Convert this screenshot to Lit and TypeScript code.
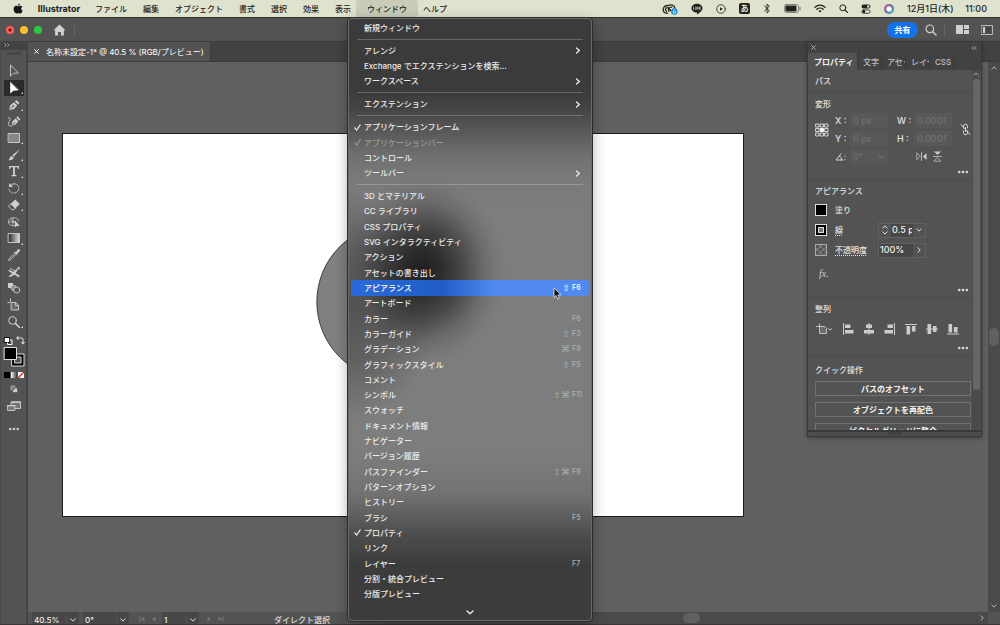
import { LitElement, html, css, svg, nothing, TemplateResult } from "lit";
import { customElement, state } from "lit/decorators.js";
import { classMap } from "lit/directives/class-map.js";

type Entry = { label: string; mods?: string; keys?: string; sub?: boolean; checked?: boolean; disabled?: boolean } | null;

const MENU: Entry[] = [
  { label: "新規ウィンドウ" },
  null,
  { label: "アレンジ", sub: true },
  { label: "Exchange でエクステンションを検索..." },
  { label: "ワークスペース", sub: true },
  null,
  { label: "エクステンション", sub: true },
  null,
  { label: "アプリケーションフレーム", checked: true },
  { label: "アプリケーションバー", checked: true, disabled: true },
  { label: "コントロール" },
  { label: "ツールバー", sub: true },
  null,
  { label: "3D とマテリアル" },
  { label: "CC ライブラリ" },
  { label: "CSS プロパティ" },
  { label: "SVG インタラクティビティ" },
  { label: "アクション" },
  { label: "アセットの書き出し" },
  { label: "アピアランス", mods: "⇧", keys: "F6" },
  { label: "アートボード" },
  { label: "カラー", keys: "F6" },
  { label: "カラーガイド", mods: "⇧", keys: "F3" },
  { label: "グラデーション", mods: "⌘", keys: "F9" },
  { label: "グラフィックスタイル", mods: "⇧", keys: "F5" },
  { label: "コメント" },
  { label: "シンボル", mods: "⇧⌘", keys: "F11" },
  { label: "スウォッチ" },
  { label: "ドキュメント情報" },
  { label: "ナビゲーター" },
  { label: "バージョン履歴" },
  { label: "パスファインダー", mods: "⇧⌘", keys: "F9" },
  { label: "パターンオプション" },
  { label: "ヒストリー" },
  { label: "ブラシ", keys: "F5" },
  { label: "プロパティ", checked: true },
  { label: "リンク" },
  { label: "レイヤー", keys: "F7" },
  { label: "分割・統合プレビュー" },
  { label: "分版プレビュー" },
];

const icon = (w: number, h: number, body: TemplateResult, box = `0 0 ${w} ${h}`) =>
  html`<svg width=${w} height=${h} viewBox=${box} aria-hidden="true" fill="none" stroke="currentColor" stroke-linecap="round" stroke-linejoin="round">${body}</svg>`;

const chevronDown = () => icon(6, 4, svg`<path d="M.7 .8 3 3.1 5.300 .8"/>`);
const chevronUp = () => icon(6, 4, svg`<path d="M.7 3.200 3 .9 5.300 3.200"/>`);
const chevronRight = () => icon(4, 6, svg`<path d="M.9 .7 3.200 3 .9 5.300"/>`);
const dots = () => icon(12, 4, svg`<g fill="currentColor" stroke="none"><circle cx="2.200" cy="2" r="1.300"/><circle cx="6" cy="2" r="1.300"/><circle cx="9.800" cy="2" r="1.300"/></g>`);

/* Toolbar glyphs, all on a 14 × 14 grid. */
const TOOLS: { name: string; more?: boolean; art: TemplateResult }[] = [
  { name: "選択", art: svg`<path d="M3.500 1.500v10.500l2.900-2.600 4.600-.5z" stroke-width=".9"/>` },
  { name: "ダイレクト選択", more: true, art: svg`<path d="M3.500 1.500v10.500l2.900-2.600 4.600-.5z" fill="#fff" stroke="#fff" stroke-width=".6"/>` },
  { name: "ペン", more: true, art: svg`<path d="M2 12.200 3.200 7.300 7 4.200l3.200 3.200-3.100 3.700zM7.900 3.400l1.500-1.500 3 3-1.500 1.500z" fill="currentColor" stroke="none"/><path d="M2 12.200 6 8.200" stroke="#535353" stroke-width=".8"/><circle cx="6.300" cy="7.900" r=".9" fill="#535353" stroke="none"/>` },
  { name: "曲線", art: svg`<path d="M4.500 11.800 5.500 7.300 8.500 4.400l2.900 2.900-2.900 3.300zM9.200 3.700l1.300-1.400 2.900 2.900-1.300 1.300z" fill="currentColor" stroke="none"/><path d="M5 11.500 8 8.300" stroke="#535353" stroke-width=".8"/><path d="M1.300 3.500C4 3.800 3.200 6 2 8.200S1.400 12.600 4.500 12" stroke-width=".9"/>` },
  { name: "長方形", more: true, art: svg`<path d="M1.500 2.500h11v9h-11z" fill="#888" stroke-width=".9"/>` },
  { name: "ブラシ", more: true, art: svg`<path d="M12.700 1.200 7 8.700 5.300 7.300zM4.700 7.900l1.900 1.600c-.2 2.200-2.600 3.200-5.200 2.600 1.500-.7 1.100-3.700 3.300-4.200z" fill="currentColor" stroke="none"/>` },
  { name: "文字", more: true, art: svg`<path d="M2 2h10v3h-1.100L10.500 3.300H7.900v7.500l1.600.5V12.200h-5v-.9l1.600-.5V3.300H3.500L3.100 5H2z" fill="currentColor" stroke="none"/>` },
  { name: "回転", more: true, art: svg`<path d="M3 5C5 2 9.500 2 11.300 5" /><path d="M2 2v4h4z" fill="currentColor" stroke="none"/><path d="M11.700 6c.6 3-1.400 5.700-4.400 6S2.500 10.500 2 8.500" stroke-dasharray="1 1.400"/>` },
  { name: "消しゴム", more: true, art: svg`<path d="M8.200 1.500 12.700 6 8.200 10.500 3.700 6z" fill="currentColor" stroke="none"/><path d="M3.700 6 1.500 8.200 5 11.700h2l1.200-1.200z" stroke-width=".9"/>` },
  { name: "シェイプ形成", art: svg`<path d="M8 10.500c-3 .8-6.500-.5-6.500-3.500S4 2.500 6 3c2-1.200 5.500.5 5.500 3M1.800 7h6M6 3v7M4 4.500l4 3" stroke-width=".8"/><path d="M8 5.500v7l1.800-1.600 3-.2z" fill="currentColor" stroke="none"/>` },
  { name: "グラデーション", more: true, art: svg`<defs><linearGradient id="tg"><stop stop-color="#2b2b2b"/><stop offset="1" stop-color="#ddd"/></linearGradient></defs><path d="M1.500 2.500h11v9h-11z" fill="url(#tg)" stroke-width=".9"/>` },
  { name: "スポイト", art: svg`<path d="M8.800 4.200 10.800 1.500a1.300 1.300 0 0 1 2 1.800L10.200 5.600l.5.700-.9.800L7 4.300l.8-.9z" fill="currentColor" stroke="none"/><path d="M7.600 5.300 2.500 10.300 1.600 12.400 3.800 11.500 8.900 6.500" stroke-width=".9"/>` },
  { name: "パペットワープ", art: svg`<path d="M2 4.500 6.500 7l3-3.200 1.200 1.200L8.500 8.200l4.500 2.300-.5 1L7.500 9.700 3 12l-1.500-.8L5.300 8.500 1.500 6z" fill="currentColor" stroke="none"/><path d="M3.500 3.500 8.500 6.500M9 10.500l2.500 1.500" stroke-width=".9"/><circle cx="11.500" cy="3.300" r="1.200" fill="currentColor" stroke="none"/>` },
  { name: "ブレンド", art: svg`<path d="M1 2h5v5H1z" fill="currentColor" stroke="none"/><circle cx="6.800" cy="7" r="2.700" fill="#8b8b8b" stroke-width=".7"/><circle cx="9.700" cy="9" r="3" fill="#535353" stroke-width=".9"/>` },
  { name: "アートボード", art: svg`<path d="M3.500 .8v3M.8 4.500h2M4.500 4.500h4.300l2.700 2.700v4.800h-7z" fill="#6c6c6c" stroke-width=".9"/><path d="M8.500 4.500v3h3" stroke-width=".8"/>` },
  { name: "ズーム", more: true, art: svg`<circle cx="5.500" cy="5.500" r="3.800"/><path d="M8.400 8.400 12.500 12.500" stroke-width="1.500"/>` },
];

const ALIGN: { name: string; art: TemplateResult }[] = [
  { name: "左揃え", art: svg`<path d="M1 0h1v12H1zM3 1.500h5.500v3.600H3zM3 6.900h8.500v3.600H3z"/>` },
  { name: "水平中央", art: svg`<path d="M5.500 0h1v12h-1zM3 1.500h6v3.600H3zM1 6.900h10v3.600H1z"/>` },
  { name: "右揃え", art: svg`<path d="M10 0h1v12h-1zM3.500 1.500H9v3.600H3.500zM.5 6.900H9v3.600H.5z"/>` },
  { name: "上揃え", art: svg`<path d="M0 1h12v1H0zM1.500 3h3.600v8.500H1.500zM6.900 3h3.600v5.500H6.900z"/>` },
  { name: "垂直中央", art: svg`<path d="M0 5.500h12v1H0zM1.500 1h3.600v10H1.500zM6.900 3h3.600v6H6.900z"/>` },
  { name: "下揃え", art: svg`<path d="M0 10.500h12v1H0zM1.500 1h3.600v8.500H1.500zM6.900 4h3.600v5.500H6.900z"/>` },
];

@customElement("app-root")
export class AppRoot extends LitElement {
  @state() private hot = "アピアランス";
  @state() private tool = "ダイレクト選択";

  static styles = css`
    :host {
      display: flex; flex-direction: column; height: 100vh; overflow: hidden; position: relative;
      background: #535353; color: #e2e2e2;
      font: 500 8px/12px Inter, "Noto Sans CJK JP", sans-serif;
    }
    * { box-sizing: border-box; }
    svg { display: block; flex: none; }
    button, input, select { font: inherit; color: inherit; background: none; border: 0; margin: 0; padding: 0; border-radius: 0; }
    button { display: flex; align-items: center; justify-content: center; white-space: nowrap; }
    input { min-width: 0; }

    .menubar { flex: none; display: flex; height: 17px; background: #dfe2cd; color: #22231e; padding: 0 13px; align-items: center; }
    .apple { width: 10px; margin-right: 7px; }
    .mb { height: 17px; padding: 0 8px; }
    .mb.app { font-size: 9px; font-weight: 700; margin-right: 6px; padding: 0 0 0 7px; width: 51px; }
    .open { position: relative; margin: 0 -3px; }
    .open > .mb { background: #c9ccb9; border-radius: 3px; padding: 0 11px; }
    .status { display: flex; align-items: center; gap: 13px; margin-left: auto; }
    .ime { width: 11px; height: 11px; border-radius: 2px; background: #22231e; color: #fff; font-size: 8px; line-height: 11px; text-align: center; }
    .clock { font-size: 9px; white-space: nowrap; width: 80px; display: flex; justify-content: space-between; }

    .appbar { flex: none; display: flex; align-items: center; height: 24px; border-top: 1px solid #333; padding: 0 7px 0 6px; color: #d0d0d0; background: #535353; }
    .light { width: 8px; height: 8px; border-radius: 50%; margin-right: 6px; }
    .red { background: radial-gradient(circle, #7c0a05 0 1px, #fb6057 2px); }
    .yellow { background: #fdbc2f; }
    .green { background: #2bc840; margin-right: 11px; }
    .vr { width: 1px; height: 13px; background: #646464; }
    .home { margin-right: 8px; }
    .tools-right { display: flex; align-items: center; margin-left: auto; }
    .share { background: #1473e6; color: #fff; border-radius: 8px; height: 16px; width: 31px; margin-right: 7px; font-weight: 700; }
    .tools-right .vr { margin: 0 11px 0 7px; }
    .layout { margin-right: 12px; }

    .work { flex: 1; min-height: 0; display: flex; border-bottom: 1px solid #3a3536; }
    .toolbar { flex: none; width: 28px; border-right: 2px solid #444; background: #535353; display: flex; flex-direction: column; align-items: center; border-left: 1px solid #494949; color: #cfcfcf; }
    .grip-head { align-self: stretch; height: 9px; background: #424242; color: #bbb; padding: 2px 0 0 3px; }
    .grip { width: 14px; height: 3px; margin: 2px 0 8px; background: #464646; }
    .tools { display: grid; grid-auto-rows: 1fr; height: 267px; width: 20px; }
    .tool { position: relative; width: 20px; }
    .tool.on { background: #2a2a2a; }
    .tool.nest::after { content: ""; position: absolute; right: 1px; bottom: 2px; border: 1px solid transparent; border-right-color: #ddd; border-bottom-color: #ddd; }
    .toolfoot { display: flex; flex-direction: column; align-items: center; margin-top: 4px; }
    .toolfoot .mode { margin-top: 4px; }
    .toolfoot .screen { margin-top: 7px; }
    .toolfoot .more-tools { margin-top: 15px; }

    .doc { flex: 1; min-width: 0; display: flex; flex-direction: column; }
    .tabs { flex: none; display: flex; height: 21px; background: #424242; border-top: 1px solid #3b3b3b; border-bottom: 1px solid #3b3b3b; }
    .tab { display: flex; align-items: center; gap: 7px; padding: 0 6px; background: #535353; border-right: 1px solid #3b3b3b; color: #fff; font-weight: 400; white-space: nowrap; }
    .stage { flex: 1; min-height: 0; display: flex; }
    .canvas { flex: 1; background: #606060; overflow: hidden; padding: 71px 0 0 34px; }
    .artboard { width: 73.6%; background: #fff; border: 1px solid #1c1c1c; }
    .artboard svg { width: 100%; height: auto; }
    .vscroll { flex: none; width: 12px; background: #4a4a4a; color: #b5b5b5; display: flex; flex-direction: column; align-items: center; justify-content: space-between; padding: 4px 0; }
    .vthumb { width: 10px; height: 18px; border-radius: 5px; background: #606060; }
    .statusbar { flex: none; display: flex; align-items: center; height: 12px; background: #535353; padding-left: 4px; overflow: hidden; }
    .statusbar input { height: 12px; background: #474747; padding: 3px 2px 0; color: #eee; }
    .zoom { width: 34px; }
    .angle { width: 33px; }
    .page { width: 24px; }
    .drop { width: 12px; height: 12px; margin: 0 4px 0 1px; padding-top: 3px; background: #474747; }
    .nav { width: 12px; height: 12px; padding-top: 2px; color: #777; }
    .nav.first { margin-left: 3px; }
    .nav.back { margin-right: 2px; }
    .current { margin-left: 47px; width: 99px; padding-top: 3px; color: #ddd; }
    .hscroll { flex: 1; height: 12px; background: #4a4a4a; display: flex; align-items: center; margin-left: 5px; color: #b5b5b5; padding: 0 4px 0 20px; }
    .hthumb { width: 17px; height: 10px; border-radius: 5px; background: #606060; margin: 0 auto; }
    .corner { width: 12px; height: 12px; background: #535353; }

    .dropdown {
      position: absolute; z-index: 5; left: -8px; top: 18px; width: 244px; height: calc(100vh - 22px);
      display: flex; flex-direction: column; padding: 1px 2px 0; color: #ececec;
      border: 1px solid #6a6a6a; border-radius: 4px; box-shadow: 0 0 0 1px #2c2c2c, 0 4px 14px #0005;
      background:
        radial-gradient(ellipse 84px 96px at 74px 252px, #1a1a1af0, #1e1e1ed8 22%, #26262698 48%, #3030303c 72%, #40404014 88%, #50505000),
        radial-gradient(ellipse 90px 115px at 0 285px, #3c3c3ca0, #3c3c3c70 50%, #50505000),
        linear-gradient(#3b3b3b 0 12%, #444 15%, #5a5a5a 19%, #717171 23%, #7a7a7a 27%, #7d7d7d 32% 72%, #727272 79%, #4c4c4c 86%, #3c3c3c 91%);
    }
    .item { flex: 2 2 0; min-height: 0; display: grid; grid-template-columns: 13px 1fr auto auto; text-align: left; padding: 0 7px 0 0; border-radius: 3px; align-items: center; justify-items: start; }
    .item .sc { font-size: 7px; color: #b0b0b0; min-width: 10px; }
    .item .mods { font: 9px/12px "DejaVu Sans", sans-serif; color: #b0b0b0; margin-right: 2px; }
    .item.dim { color: #999; }
    .item.hot { background: linear-gradient(90deg, #2a6adb, #1f5dc4 38%, #5089f0 60%); color: #fff; }
    .item.hot .sc, .item.hot .mods { color: #fff; }
    .tick { padding-left: 3px; }
    .sep { flex: 1 1 0; min-height: 0; display: flex; align-items: center; padding: 0 6px; }
    .sep i { flex: 1; height: 1px; background: #ffffff38; }
    .scroll { flex: none; height: 18px; display: flex; align-items: center; justify-content: center; padding-top: 4px; }
    .pointer { position: absolute; z-index: 6; left: 553px; top: 287px; }

    .panel { position: absolute; z-index: 3; right: 18px; top: 41px; width: 175px; height: 396px; display: flex; flex-direction: column; background: #535353; border: 1px solid #3a3a3a; box-shadow: 0 1px 4px #0006; }
    .phead { flex: none; height: 11px; background: #424242; display: flex; justify-content: space-between; align-items: center; padding: 0 4px 0 3px; color: #ccc; }
    .ptabs { flex: none; height: 17px; background: #424242; display: flex; }
    .ptab { width: 24px; padding: 0 0 0 5px; justify-content: flex-start; overflow: hidden; color: #bdbdbd; border-right: 1px solid #393939; }
    .ptab.on { width: 50px; padding-left: 6px; background: #535353; color: #f2f2f2; font-weight: 700; }
    .pbody { flex: 1; min-height: 0; display: flex; overflow: hidden; }
    .content { flex: 1; min-width: 0; overflow: hidden; }
    .section { padding: 5px 1px 5px 7px; border-top: 1px solid #4a4a4a; }
    .section.first { border: 0; }
    .title { margin: 0 0 3px; font-size: 8px; font-weight: 500; height: 12px; }
    .section.first .title { margin: 0; }
    .geo { display: grid; grid-template-columns: 20px 15px 38px 26px 38px 1fr; row-gap: 3px; align-items: center; }
    .geo label { font-size: 9px; }
    .geo label.w { padding-left: 9px; }
    .geo input, .geo select { height: 15px; width: 100%; background: #585858; color: #707070; padding: 0 3px; font-size: 9px; appearance: none; opacity: 1; }
    .ref { grid-row: 1 / 3; }
    .link { grid-row: 1 / 3; grid-column: 6; justify-self: end; }
    .ang { grid-column: 2; }
    .flips { grid-column: 4 / 7; display: flex; gap: 6px; align-items: center; padding-left: 28px; color: #ccc; }
    .selwrap { display: grid; align-items: center; justify-items: end; color: #777; }
    .selwrap > * { grid-area: 1 / 1; }
    .selwrap svg { margin-right: 4px; pointer-events: none; }
    .more { display: flex; justify-content: flex-end; padding: 0 2px; height: 10px; align-items: flex-end; margin: 0 0 0 auto; color: #ddd; }
    .attrs { display: grid; grid-template-columns: 20px 43px auto; grid-auto-rows: 20px; align-items: center; margin-bottom: 6px; }
    .swatch { width: 12px; height: 12px; border: 1px solid #ddd; background: #000; }
    .swatch.stroke { box-shadow: inset 0 0 0 2px #000, inset 0 0 0 3px #ddd; background: #777; }
    .swatch.alpha { background: repeating-conic-gradient(#777 0 25%, #555 0 50%) 0 0 / 6px 6px; border-color: #aaa; }
    .dot { text-decoration: underline dotted 1px; text-underline-offset: 2px; }
    .field { display: flex; border: 1px solid #626262; height: 15px; width: 48px; }
    .field input { background: #474747; font-size: 9px; color: #f0f0f0; padding: 0 1px; flex: 1; }
    .field button, .field .step { flex: none; width: 12px; display: flex; flex-direction: column; align-items: center; justify-content: center; gap: 2px; }
    .fx { font: italic 10px/16px "Liberation Serif", serif; color: #ccc; margin-left: 4px; }
    .aligns { display: grid; grid-template-columns: 24px repeat(6, 21px); height: 16px; align-items: center; color: #ccc; margin: 6px 0 3px; }
    .aligns button { justify-content: flex-start; }
    .aligns button:not(:first-child) { padding-left: 3px; }
    .section.actions { padding-top: 8px; }
    .actions .title { margin-bottom: 5px; }
    .quick { width: 100%; height: 15px; border: 1px solid #707070; color: #f2f2f2; font-weight: 700; margin-bottom: 6px; }
    .pscroll { flex: none; width: 8px; margin-right: 1px; background: #4a4a4a; color: #aaa; display: flex; flex-direction: column; align-items: center; padding-top: 2px; }
    .pthumb { width: 7px; flex: none; height: 87%; border-radius: 3px; background: #666; margin-top: 3px; }
    .pfoot { flex: none; height: 6px; border-top: 2px solid #383838; background: #4d4d4d; display: flex; justify-content: center; }
    .pfoot i { width: 14px; height: 3px; background: #414141; }
  `;

  private entry(e: Entry) {
    if (!e) return html`<div class="sep" role="separator"><i></i></div>`;
    return html`<button role="menuitem" class=${classMap({ item: true, dim: !!e.disabled, hot: e.label === this.hot })}
        ?disabled=${!!e.disabled} @mouseenter=${() => (this.hot = e.label)}>
      <span class="tick">${e.checked ? icon(7, 7, svg`<path d="M.8 3.800 2.700 6 6.200 .9" stroke-width="1.200"/>`) : nothing}</span>
      <span>${e.label}</span>
      ${e.sub
        ? icon(7, 7, svg`<path d="M1.500 .9 4.400 3.500 1.500 6.100" stroke-width="1.300"/>`)
        : html`<span class="mods">${e.mods ?? ""}</span>${e.keys ? html`<span class="sc">${e.keys}</span>` : nothing}`}
    </button>`;
  }

  private menubar() {
    return html`<nav class="menubar">
      <svg class="apple" width="10" height="12" viewBox="0 0 10 12" fill="#151613" aria-hidden="true"><path d="M6.900 .4c.1 1.200-.9 2.300-2 2.300C4.800 1.600 5.800 .5 6.900 .4zM5.100 3.300c.5 0 1.200-.6 2.200-.6.8 0 1.500.4 2 1-1.600 1-1.400 3.300.3 4-.4 1.200-1.400 2.900-2.400 2.900-.7 0-1-.4-1.900-.4s-1.200.4-1.900.4C2.100 10.600.6 8.300.6 6.100c0-2.100 1.300-3.300 2.600-3.300.9 0 1.400.5 1.900.5z"/></svg>
      <button class="mb app">Illustrator</button>
      ${["ファイル", "編集", "オブジェクト", "書式", "選択", "効果", "表示"].map((t) => html`<button class="mb">${t}</button>`)}
      <div class="open">
        <button class="mb" aria-expanded="true">ウィンドウ</button>
        <div class="dropdown" role="menu">
          ${MENU.map((e) => this.entry(e))}
          <div class="scroll">${icon(8, 5, svg`<path d="M1 1 4 3.800 7 1" stroke-width="1.400"/>`)}</div>
        </div>
      </div>
      <button class="mb">ヘルプ</button>
      <div class="status">
        ${icon(16, 12, svg`<path d="M5.500 10.200C2.500 10.600.8 8.300 1.200 6 1.600 3.500 4 2 6.300 2.700 8.500 1 12.300 2 13 5.200M4.500 8.300C2.800 7.300 3.300 4.700 5.300 4.700c1.700 0 2.200 1.300 3.400 2.800M9.700 4.200C7 4 5.600 6.300 7 8.300" stroke-width="1.300"/><circle cx="12.300" cy="8.500" r="3.200" fill="#1785d8" stroke="none"/><path d="M11.300 9.800v-2l1-.8 1 .8v2z" stroke="#fff" stroke-width=".7"/>`)}
        ${icon(12, 12, svg`<path d="M6 .8c3 0 5.500 1.900 5.500 4.400 0 2.400-2.500 4-5.300 6.200-.3-.6.300-1.600-.5-1.800C2.900 9.300.5 7.600.5 5.200.5 2.700 3 .8 6 .8z" fill="currentColor" stroke="none"/><path d="M2.500 4v2.300h1M4.700 4v2.300M5.800 6.300V4l1.400 2.300V4M9.600 4H8.400v2.300h1.200M8.400 5.200h1" stroke="#dfe2cd" stroke-width=".6"/>`)}
        ${icon(10, 10, svg`<circle cx="5" cy="5" r="4.300" stroke-width=".8"/><path d="M4 3.200v3.600L6.900 5z" fill="currentColor" stroke="none"/>`)}
        <span class="ime">あ</span>
        ${icon(8, 11, svg`<path d="M1.500 3 6.300 7.700 4 9.900V1.100l2.300 2.200L1.500 8" stroke-width=".9"/>`)}
        ${icon(17, 9, svg`<rect x=".5" y=".5" width="14" height="8" rx="2" stroke-width=".8" opacity=".6"/><rect x="1.500" y="1.500" width="11" height="6" rx="1" fill="currentColor" stroke="none"/><path d="M16 3.200v2.600" opacity=".6"/>`)}
        ${icon(12, 9, svg`<path d="M1 3.300C3.800.5 8.200.5 11 3.300M2.800 5.300c1.800-1.700 4.600-1.700 6.400 0" stroke-width="1.300"/><path d="M4.400 6.900c.9-.8 2.300-.8 3.200 0L6 8.600z" fill="currentColor" stroke="none"/>`)}
        ${icon(9, 9, svg`<circle cx="3.800" cy="3.800" r="3"/><path d="M6 6 8.400 8.400" stroke-width="1.200"/>`)}
        ${icon(10, 10, svg`<rect x=".6" y=".6" width="8.800" height="3.800" rx="1.900" fill="currentColor" stroke="none"/><circle cx="7.200" cy="2.500" r="1.200" fill="#dfe2cd" stroke="none"/><rect x=".9" y="5.900" width="8.200" height="3.400" rx="1.700" stroke-width=".8"/><circle cx="2.800" cy="7.600" r="1.500" fill="currentColor" stroke="none"/>`)}
        ${icon(10, 10, svg`<defs><linearGradient id="siri" x1="0" y1="0" x2="1" y2="1"><stop stop-color="#e4417f"/><stop offset=".5" stop-color="#555f9c"/><stop offset="1" stop-color="#28b8d6"/></linearGradient><radialGradient id="glow"><stop offset=".4" stop-color="#fff"/><stop offset="1" stop-color="#fff" stop-opacity="0"/></radialGradient></defs><circle cx="5" cy="5" r="5" fill="url(#siri)" stroke="none"/><circle cx="5" cy="5" r="4" fill="url(#glow)" stroke="none"/>`)}
        <time class="clock"><span>12月1日(木)</span><span>11:00</span></time>
      </div>
    </nav>`;
  }

  private toolbar() {
    return html`<aside class="toolbar">
      <div class="grip-head">${icon(6, 4, svg`<path d="M.7 .6 2.200 2 .7 3.400M3.500 .6 5 2 3.500 3.400" stroke-width=".7"/>`)}</div>
      <div class="grip"></div>
      <div class="tools">
        ${TOOLS.map((t) => html`<button aria-label=${t.name} class=${classMap({ tool: true, nest: !!t.more, on: t.name === this.tool })} @click=${() => (this.tool = t.name)}>${icon(14, 14, t.art)}</button>`)}
      </div>
      <div class="toolfoot">
        ${icon(22, 46, svg`
          <path d="M1.500 3.500h5v5h-5z" fill="#fff" stroke="#111"/><path d="M7 6h2v4.500H4.500V9" stroke="#fff" />
          <path d="M15 4h3.500c1 0 1.500.5 1.500 1.500V9" stroke-width="1.100"/><path d="M15.500 1.500v5L13 4zM17.700 8h4.600L20 10.500z" fill="currentColor" stroke="none"/>
          <path d="M9 20h12v12H9z" fill="#000" stroke="#ddd"/><path d="M12 23h6v6h-6z" fill="#535353" stroke="#ddd"/>
          <path d="M1.500 13.500h12v12h-12z" fill="#000" stroke="#ddd"/>
          <defs><linearGradient id="sg"><stop stop-color="#fff"/><stop offset="1" stop-color="#333"/></linearGradient></defs>
          <g stroke="none"><path d="M1 38h6v6H1z" fill="#000"/><path d="M8 38h6v6H8z" fill="url(#sg)"/><path d="M15 38h6v6h-6z" fill="#fff"/></g><path d="M15.500 43.500 20.500 38.500" stroke="#e01515" stroke-width="1.300"/>`)}
        <button class="mode" aria-label="描画モード">${icon(10, 10, svg`<circle cx="4" cy="4" r="2.800" fill="#9a9a9a" stroke="none"/><path d="M4 4h4.500v4.500H4z" fill="#cfcfcf" stroke="#535353" stroke-width=".6"/><circle cx="4.500" cy="4.500" r="1.500" fill="#777" stroke="none"/>`)}</button>
        <button class="screen" aria-label="スクリーンモード">${icon(14, 11, svg`<path d="M4.500 1h9v6.500h-9z" fill="#777" stroke-width=".9"/><path d="M.8 4.500h7v5h-7z" fill="#777" stroke-width=".9"/><path d="M.8 4.700h7M4.500 1.200h9" stroke-width="1.300"/>`)}</button>
        <button class="more-tools" aria-label="ツールバーを編集">${dots()}</button>
      </div>
    </aside>`;
  }

  private panel() {
    return html`<section class="panel">
      <div class="phead">${icon(5, 5, svg`<path d="M.7 .7 4.300 4.300M4.300 .7 .7 4.300" stroke-width=".8"/>`)}${icon(6, 4, svg`<path d="M2.500 .6 1 2 2.500 3.400M5.200 .6 3.700 2 5.200 3.400" stroke-width=".7"/>`)}</div>
      <div class="ptabs"><button class="ptab on">プロパティ</button><button class="ptab">文字</button><button class="ptab">アセット</button><button class="ptab">レイヤー</button><button class="ptab">CSS</button></div>
      <div class="pbody">
        <div class="content">
          <div class="section first"><h2 class="title">パス</h2></div>
          <div class="section">
            <h2 class="title">変形</h2>
            <div class="geo">
              <span class="ref">${icon(14, 14, svg`<g stroke-width=".9"><path d="M1 1h3v3H1zM5.500 1h3v3h-3zM10 1h3v3h-3zM1 5.500h3v3H1zM10 5.500h3v3h-3zM1 10h3v3H1zM5.500 10h3v3h-3zM10 10h3v3h-3z"/><path d="M5.500 5.500h3v3h-3z" fill="#fff" stroke="#fff"/></g>`)}</span>
              <label for="x">X :</label><input id="x" value="0 px" disabled>
              <label class="w" for="w">W :</label><input id="w" value="0.0001" disabled>
              <label for="y">Y :</label><input id="y" value="0 px" disabled>
              <label class="w" for="h">H :</label><input id="h" value="0.0001" disabled>
              <button class="link" aria-label="縦横比を固定">${icon(11, 13, svg`<path d="M3.500 5V3.200a2 2 0 0 1 4 0V5M3.500 8v1.800a2 2 0 0 0 4 0V8M5.500 4.500v4M1 1.500 10 11.500" stroke-width=".9"/>`)}</button>
              <label class="ang" for="a" aria-label="角度">${icon(11, 8, svg`<path d="M6 .8 1 7h7M4.500 3c1.500.8 2.200 2.200 2 4" stroke-width=".9"/><path d="M10 3v.1M10 6.500v.1" stroke-width="1.200"/>`)}</label>
              <span class="selwrap"><select id="a" disabled><option>0°</option></select>${chevronDown()}</span>
              <span class="flips">${icon(11, 9, svg`<path d="M.8 1.200v6.600L4 4.500z" stroke-width=".7"/><path d="M10.500 1v7L7 4.500z" fill="currentColor" stroke="none"/><path d="M5.500 .5v8" stroke-width=".8"/>`)}${icon(9, 11, svg`<path d="M1.200 10.200h6.600L4.500 7z" stroke-width=".7"/><path d="M1 .5h7L4.500 4z" fill="currentColor" stroke="none"/><path d="M.5 5.500h8" stroke-width=".8"/>`)}</span>
            </div>
            <button class="more" aria-label="詳細オプション">${dots()}</button>
          </div>
          <div class="section">
            <h2 class="title">アピアランス</h2>
            <div class="attrs">
              <span class="swatch"></span><span>塗り</span><span></span>
              <span class="swatch stroke"></span><label class="dot" for="s">線</label>
              <span class="field"><span class="step">${chevronUp()}${chevronDown()}</span><input id="s" value="0.5 pt"><button aria-label="線幅">${chevronDown()}</button></span>
              <span class="swatch alpha"></span><label class="dot" for="o">不透明度</label>
              <span class="field"><input id="o" value="100%"><button aria-label="不透明度の調整">${chevronRight()}</button></span>
            </div>
            <button class="fx">fx.</button>
            <button class="more" aria-label="詳細オプション">${dots()}</button>
          </div>
          <div class="section">
            <h2 class="title">整列</h2>
            <div class="aligns">
              <button aria-label="整列の基準">${icon(18, 12, svg`<path d="M4.500 1v2M1.500 3.500h8l2 2v5h-7v-7" fill="#6c6c6c" stroke-width=".9"/><path d="M13 5.300 15 7.200 17 5.300" stroke-width=".9"/>`)}</button>
              ${ALIGN.map((a) => html`<button aria-label=${a.name}>${icon(12, 12, svg`<g fill="currentColor" stroke="none">${a.art}</g>`)}</button>`)}
            </div>
            <button class="more" aria-label="詳細オプション">${dots()}</button>
          </div>
          <div class="section actions">
            <h2 class="title">クイック操作</h2>
            <button class="quick">パスのオフセット</button>
            <button class="quick">オブジェクトを再配色</button>
            <button class="quick">ピクセルグリッドに整合</button>
          </div>
        </div>
        <div class="pscroll">${chevronUp()}<div class="pthumb"></div></div>
      </div>
      <div class="pfoot"><i></i></div>
    </section>`;
  }

  render() {
    return html`
      ${this.menubar()}
      <header class="appbar">
        <span class="light red"></span><span class="light yellow"></span><span class="light green"></span>
        <button class="home" aria-label="ホーム">${icon(13, 12, svg`<path d="M6.500 .5 .5 6.300h1.600v5.200h3V8h2.800v3.500h3V6.300h1.600z" fill="currentColor" stroke="none"/>`)}</button>
        <span class="vr"></span>
        <div class="tools-right">
          <button class="share">共有</button>
          <button aria-label="検索">${icon(12, 12, svg`<circle cx="4.800" cy="4.800" r="3.800" stroke-width="1.200"/><path d="M7.700 7.700 11 11" stroke-width="1.500"/>`)}</button>
          <span class="vr"></span>
          <button class="layout" aria-label="ドキュメントの配置">${icon(13, 9, svg`<path d="M0 0h7v9H0zM8 0h5v4H8zM8 5h5v4H8z" fill="currentColor" stroke="none"/>`)}</button>
          <button aria-label="ワークスペース">${icon(12, 10, svg`<path d="M.5 .5h11v9H.5z" stroke-width=".8"/><path d="M2 2h2v6H2z" fill="currentColor" stroke="none"/><path d="M5 2h5v6H5z" fill="#444" stroke="none"/>`)}</button>
        </div>
      </header>
      <main class="work">
        ${this.toolbar()}
        <div class="doc">
          <div class="tabs"><div class="tab">${icon(5, 5, svg`<path d="M.7 .7 4.300 4.300M4.300 .7 .7 4.300"/>`)}<span>名称未設定-1* @ 40.5 % (RGB/プレビュー)</span></div></div>
          <div class="stage">
            <div class="canvas"><div class="artboard"><svg viewBox="0 0 680 382" aria-hidden="true"><circle cx="332" cy="168" r="78" fill="#808080" stroke="#222" stroke-width=".8"/></svg></div></div>
            <div class="vscroll">${chevronUp()}<div class="vthumb"></div>${chevronDown()}</div>
          </div>
          <div class="statusbar">
            <input class="zoom" aria-label="ズーム" value="40.5%"><button class="drop" aria-label="ズーム一覧">${chevronDown()}</button>
            <input class="angle" aria-label="回転" value="0°"><button class="drop" aria-label="回転一覧">${chevronDown()}</button>
            <button class="nav first" aria-label="最初">${icon(6, 6, svg`<path d="M5.500 .8v4.400L2 3z" fill="currentColor" stroke="none"/><path d="M1 .8v4.400"/>`)}</button>
            <button class="nav back" aria-label="前へ">${icon(6, 6, svg`<path d="M4.500 .8v4.400L1 3z" fill="currentColor" stroke="none"/>`)}</button>
            <input class="page" aria-label="アートボード番号" value="1"><button class="drop" aria-label="アートボード一覧">${chevronDown()}</button>
            <button class="nav" aria-label="次へ">${icon(6, 6, svg`<path d="M1.500 .8v4.400L5 3z" fill="currentColor" stroke="none"/>`)}</button>
            <button class="nav" aria-label="最後">${icon(6, 6, svg`<path d="M.5 .8v4.400L4 3z" fill="currentColor" stroke="none"/><path d="M5 .8v4.400"/>`)}</button>
            <span class="current">ダイレクト選択</span>
            ${icon(4, 6, svg`<path d="M.5 .8v4.400L3.500 3z" fill="#aaa" stroke="none"/>`)}
            <div class="hscroll"><div class="hthumb"></div>${chevronRight()}</div>
            <div class="corner"></div>
          </div>
        </div>
      </main>
      ${this.panel()}
      <svg class="pointer" width="10" height="13" viewBox="0 0 10 13" aria-hidden="true"><path d="M1 1v9.500l2.200-2 1.500 3.400 1.700-.7L5 7.900l3-.2z" fill="#111" stroke="#e6ecf8" stroke-width=".8"/></svg>
    `;
  }
}
